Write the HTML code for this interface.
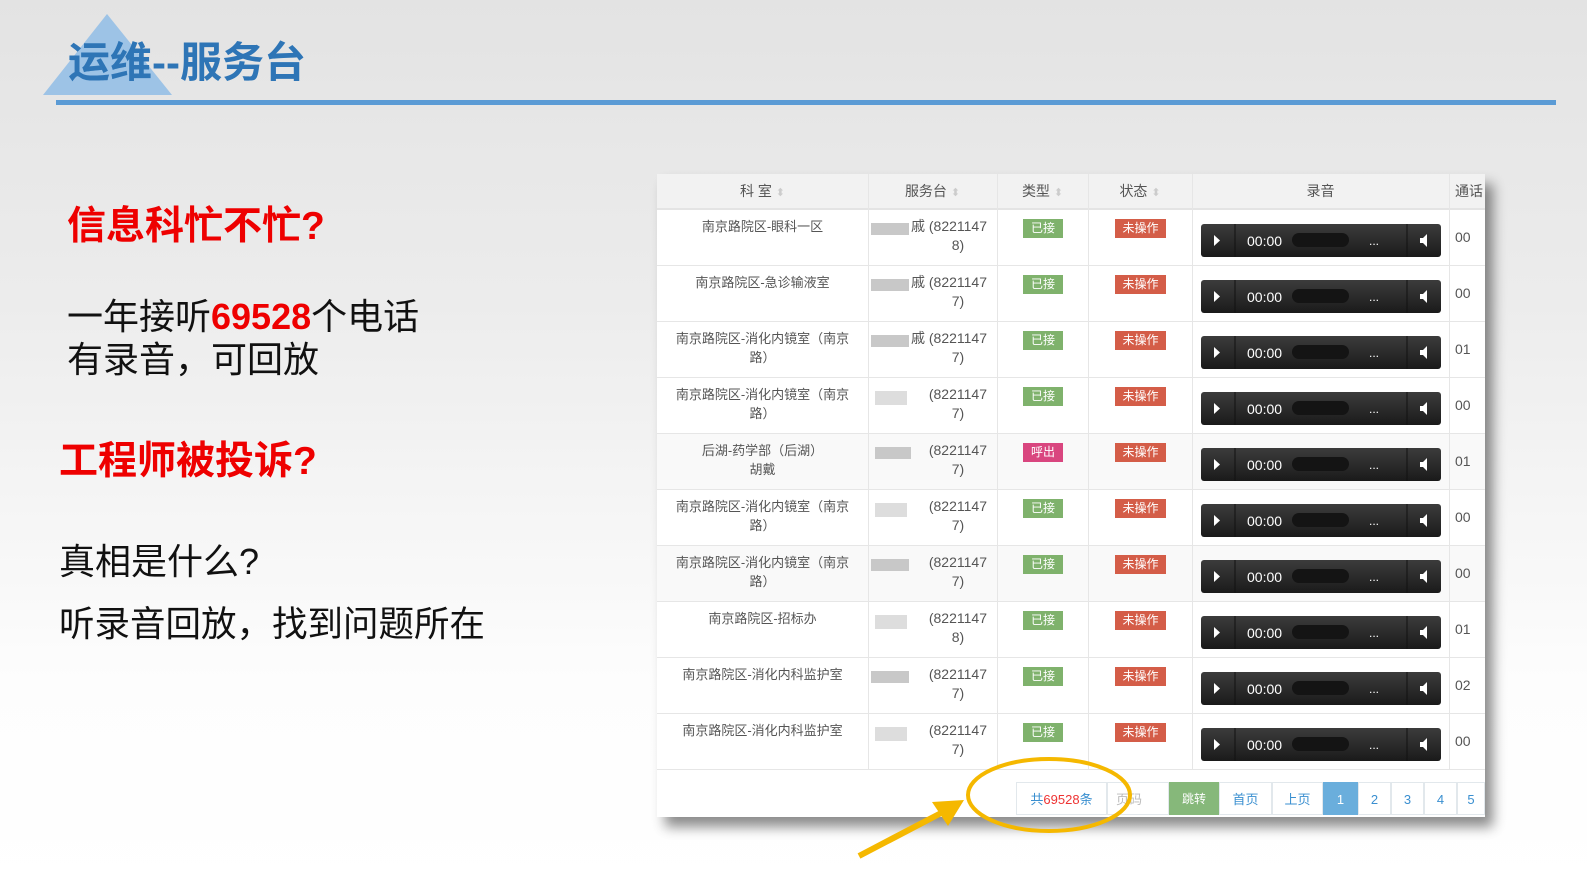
<!DOCTYPE html>
<html><head><meta charset="utf-8"><style>
*{margin:0;padding:0;box-sizing:border-box}
body{width:1587px;height:892px;overflow:hidden;position:relative;font-family:"Liberation Sans","Noto Sans CJK SC",sans-serif;background:linear-gradient(#e3e3e3 0px,#ececec 300px,#f7f7f7 550px,#fdfdfd 680px,#fff 892px)}
.a{position:absolute;white-space:nowrap}
.t{font-weight:bold;color:#e00;font-size:39px}
.b{color:#111;font-size:36px}
#tbl{position:absolute;left:657px;top:174px;width:828px;height:643px;background:#fff;box-shadow:8px 10px 12px rgba(0,0,0,.45)}
.hd{position:absolute;left:0;top:0;width:828px;height:36px;background:#f2f2f2;border-bottom:2px solid #e4e4e4}
.c{position:absolute;font-size:13px;color:#555;text-align:center;line-height:19px}
.sd{position:absolute;left:250px;width:84px;font-size:14px;color:#555;text-align:center;line-height:19px;white-space:nowrap}
.vl{position:absolute;top:0;width:1px;height:596px;background:#e6e6e6}
.row{position:absolute;left:0;width:828px;height:56px;border-bottom:1px solid #e6e6e6}
.bd{position:absolute;font-size:12px;color:#fff;height:19px;line-height:19px;text-align:center}
.pg{position:absolute;top:608px;height:33px;line-height:33px;font-size:13px;color:#3a8fd0;text-align:center;border:1px solid #e2e8ec;background:#fff}
.sort{color:#ccc;font-size:11px}
</style></head><body>
<svg class="a" style="left:0;top:0" width="1587" height="110">
<polygon points="107,14 43,95 172,95" fill="#9dc3e6"/>
<rect x="56" y="100" width="1500" height="5" fill="#5b9bd5"/>
</svg>
<div class="a" style="left:68px;top:37px;font-size:42px;font-weight:bold;color:#2e75b6;line-height:52px">运维--服务台</div>

<div class="a t" style="left:67px;top:202px;line-height:50px">信息科忙不忙?</div>
<div class="a b" style="left:67px;top:295px;line-height:44px">一年接听<span style="color:#e00;font-weight:bold">69528</span>个电话</div>
<div class="a b" style="left:67px;top:338px;line-height:44px">有录音，可回放</div>
<div class="a t" style="left:59px;top:437px;line-height:50px">工程师被投诉?</div>
<div class="a b" style="left:59px;top:540px;line-height:44px">真相是什么?</div>
<div class="a b" style="left:59px;top:602px;line-height:44px;font-size:35.5px">听录音回放，找到问题所在</div>

<div id="tbl">
<div class="hd"></div>
<div class="c" style="left:0;width:211px;top:8px;font-size:14px">科 室 <span class="sort">⬍</span></div>
<div class="c" style="left:211px;width:129px;top:8px;font-size:14px">服务台 <span class="sort">⬍</span></div>
<div class="c" style="left:340px;width:91px;top:8px;font-size:14px">类型 <span class="sort">⬍</span></div>
<div class="c" style="left:431px;width:104px;top:8px;font-size:14px">状态 <span class="sort">⬍</span></div>
<div class="c" style="left:535px;width:257px;top:8px;font-size:14px">录音</div>
<div class="c" style="left:792px;width:40px;top:8px;font-size:14px;text-align:left;padding-left:6px">通话</div>

<div class="row" style="top:36px"></div><div class="row" style="top:92px"></div><div class="row" style="top:148px"></div><div class="row" style="top:204px"></div><div class="row" style="top:260px;background:#f9f9f9"></div><div class="row" style="top:316px"></div><div class="row" style="top:372px;background:#f9f9f9"></div><div class="row" style="top:428px"></div><div class="row" style="top:484px"></div><div class="row" style="top:540px"></div>
<div class="vl" style="left:211px"></div><div class="vl" style="left:340px"></div><div class="vl" style="left:431px"></div><div class="vl" style="left:535px"></div><div class="vl" style="left:792px"></div>

<div class="c" style="left:0;width:211px;top:43px">南京路院区-眼科一区</div>
<div class="c" style="left:0;width:211px;top:99px">南京路院区-急诊输液室</div>
<div class="c" style="left:10px;width:191px;top:155px;white-space:normal">南京路院区-消化内镜室（南京路）</div>
<div class="c" style="left:10px;width:191px;top:211px;white-space:normal">南京路院区-消化内镜室（南京路）</div>
<div class="c" style="left:0;width:211px;top:267px">后湖-药学部（后湖）<br>胡戴</div>
<div class="c" style="left:10px;width:191px;top:323px;white-space:normal">南京路院区-消化内镜室（南京路）</div>
<div class="c" style="left:10px;width:191px;top:379px;white-space:normal">南京路院区-消化内镜室（南京路）</div>
<div class="c" style="left:0;width:211px;top:435px">南京路院区-招标办</div>
<div class="c" style="left:0;width:211px;top:491px">南京路院区-消化内科监护室</div>
<div class="c" style="left:0;width:211px;top:547px">南京路院区-消化内科监护室</div>

<div class="sd" style="top:43px;text-align:right;padding-right:4px">戚 (8221147</div><div class="sd" style="top:62px;padding-left:18px">8)</div>
<div class="sd" style="top:99px;text-align:right;padding-right:4px">戚 (8221147</div><div class="sd" style="top:118px;padding-left:18px">7)</div>
<div class="sd" style="top:155px;text-align:right;padding-right:4px">戚 (8221147</div><div class="sd" style="top:174px;padding-left:18px">7)</div>
<div class="sd" style="top:211px;text-align:right;padding-right:4px">(8221147</div><div class="sd" style="top:230px;padding-left:18px">7)</div>
<div class="sd" style="top:267px;text-align:right;padding-right:4px">(8221147</div><div class="sd" style="top:286px;padding-left:18px">7)</div>
<div class="sd" style="top:323px;text-align:right;padding-right:4px">(8221147</div><div class="sd" style="top:342px;padding-left:18px">7)</div>
<div class="sd" style="top:379px;text-align:right;padding-right:4px">(8221147</div><div class="sd" style="top:398px;padding-left:18px">7)</div>
<div class="sd" style="top:435px;text-align:right;padding-right:4px">(8221147</div><div class="sd" style="top:454px;padding-left:18px">8)</div>
<div class="sd" style="top:491px;text-align:right;padding-right:4px">(8221147</div><div class="sd" style="top:510px;padding-left:18px">7)</div>
<div class="sd" style="top:547px;text-align:right;padding-right:4px">(8221147</div><div class="sd" style="top:566px;padding-left:18px">7)</div>
<svg class="a" style="left:214px;top:36px" width="48" height="560">
<g fill="#c8c8c8"><rect x="0" y="13" width="38" height="12"/><rect x="0" y="69" width="38" height="12"/><rect x="0" y="125" width="38" height="12"/><rect x="4" y="181" width="32" height="14" fill="#ddd"/><rect x="4" y="237" width="36" height="12"/><rect x="4" y="293" width="32" height="14" fill="#ddd"/><rect x="0" y="349" width="38" height="12"/><rect x="4" y="405" width="32" height="14" fill="#ddd"/><rect x="0" y="461" width="38" height="12"/><rect x="4" y="517" width="32" height="14" fill="#ddd"/></g>
</svg>

<div class="bd" style="left:366px;width:40px;top:45px;background:#7fb26c">已接</div>
<div class="bd" style="left:366px;width:40px;top:101px;background:#7fb26c">已接</div>
<div class="bd" style="left:366px;width:40px;top:157px;background:#7fb26c">已接</div>
<div class="bd" style="left:366px;width:40px;top:213px;background:#7fb26c">已接</div>
<div class="bd" style="left:366px;width:40px;top:269px;background:#d9467f">呼出</div>
<div class="bd" style="left:366px;width:40px;top:325px;background:#7fb26c">已接</div>
<div class="bd" style="left:366px;width:40px;top:381px;background:#7fb26c">已接</div>
<div class="bd" style="left:366px;width:40px;top:437px;background:#7fb26c">已接</div>
<div class="bd" style="left:366px;width:40px;top:493px;background:#7fb26c">已接</div>
<div class="bd" style="left:366px;width:40px;top:549px;background:#7fb26c">已接</div>
<div class="bd" style="left:458px;width:51px;top:45px;background:#d45d48">未操作</div>
<div class="bd" style="left:458px;width:51px;top:101px;background:#d45d48">未操作</div>
<div class="bd" style="left:458px;width:51px;top:157px;background:#d45d48">未操作</div>
<div class="bd" style="left:458px;width:51px;top:213px;background:#d45d48">未操作</div>
<div class="bd" style="left:458px;width:51px;top:269px;background:#d45d48">未操作</div>
<div class="bd" style="left:458px;width:51px;top:325px;background:#d45d48">未操作</div>
<div class="bd" style="left:458px;width:51px;top:381px;background:#d45d48">未操作</div>
<div class="bd" style="left:458px;width:51px;top:437px;background:#d45d48">未操作</div>
<div class="bd" style="left:458px;width:51px;top:493px;background:#d45d48">未操作</div>
<div class="bd" style="left:458px;width:51px;top:549px;background:#d45d48">未操作</div>

<svg class="a" style="left:544px;top:36px" width="240" height="560">
<defs><linearGradient id="g" x1="0" y1="0" x2="0" y2="1"><stop offset="0" stop-color="#3c3c3c"/><stop offset="1" stop-color="#1a1a1a"/></linearGradient>
<g id="p"><rect x="0" y="0" width="240" height="33" rx="3" fill="url(#g)"/><line x1="34" y1="0" x2="34" y2="33" stroke="#111"/><line x1="206" y1="0" x2="206" y2="33" stroke="#111"/><polygon points="13,11 13,22 19,16.5" fill="#fff"/><rect x="91" y="9" width="57" height="14" rx="7" fill="#141414"/><text x="46" y="22" fill="#fff" font-size="14" font-family="Liberation Sans">00:00</text><text x="168" y="21" fill="#fff" font-size="12" font-family="Liberation Sans">...</text><polygon points="219,14 222,14 226,10 226,23 222,19 219,19" fill="#fff"/></g></defs>
<use href="#p" y="14"/><use href="#p" y="70"/><use href="#p" y="126"/><use href="#p" y="182"/><use href="#p" y="238"/><use href="#p" y="294"/><use href="#p" y="350"/><use href="#p" y="406"/><use href="#p" y="462"/><use href="#p" y="518"/>
</svg>
<div class="c" style="left:798px;top:54px;font-size:14px">00</div><div class="c" style="left:798px;top:110px;font-size:14px">00</div><div class="c" style="left:798px;top:166px;font-size:14px">01</div><div class="c" style="left:798px;top:222px;font-size:14px">00</div><div class="c" style="left:798px;top:278px;font-size:14px">01</div><div class="c" style="left:798px;top:334px;font-size:14px">00</div><div class="c" style="left:798px;top:390px;font-size:14px">00</div><div class="c" style="left:798px;top:446px;font-size:14px">01</div><div class="c" style="left:798px;top:502px;font-size:14px">02</div><div class="c" style="left:798px;top:558px;font-size:14px">00</div>

<div class="pg" style="left:359px;width:91px">共<span style="color:#e33">69528</span>条</div>
<div class="pg" style="left:450px;width:62px;color:#bbb;text-align:left;padding-left:8px">页码</div>
<div class="pg" style="left:512px;width:50px;background:#86b87a;color:#fff;font-size:12px;border-color:#86b87a">跳转</div>
<div class="pg" style="left:562px;width:53px">首页</div>
<div class="pg" style="left:615px;width:51px">上页</div>
<div class="pg" style="left:666px;width:35px;background:#6aaedc;color:#fff;border-color:#6aaedc">1</div>
<div class="pg" style="left:701px;width:33px">2</div>
<div class="pg" style="left:734px;width:33px">3</div>
<div class="pg" style="left:767px;width:33px">4</div>
<div class="pg" style="left:800px;width:28px">5</div>
</div>

<svg class="a" style="left:0;top:0" width="1587" height="892">
<ellipse cx="1049" cy="795" rx="81" ry="36" fill="none" stroke="#f5b800" stroke-width="4"/>
<line x1="859" y1="856" x2="945" y2="811" stroke="#f5b800" stroke-width="6"/>
<polygon points="964,800 932,802 948,826" fill="#f5b800"/>
</svg>
</body></html>
